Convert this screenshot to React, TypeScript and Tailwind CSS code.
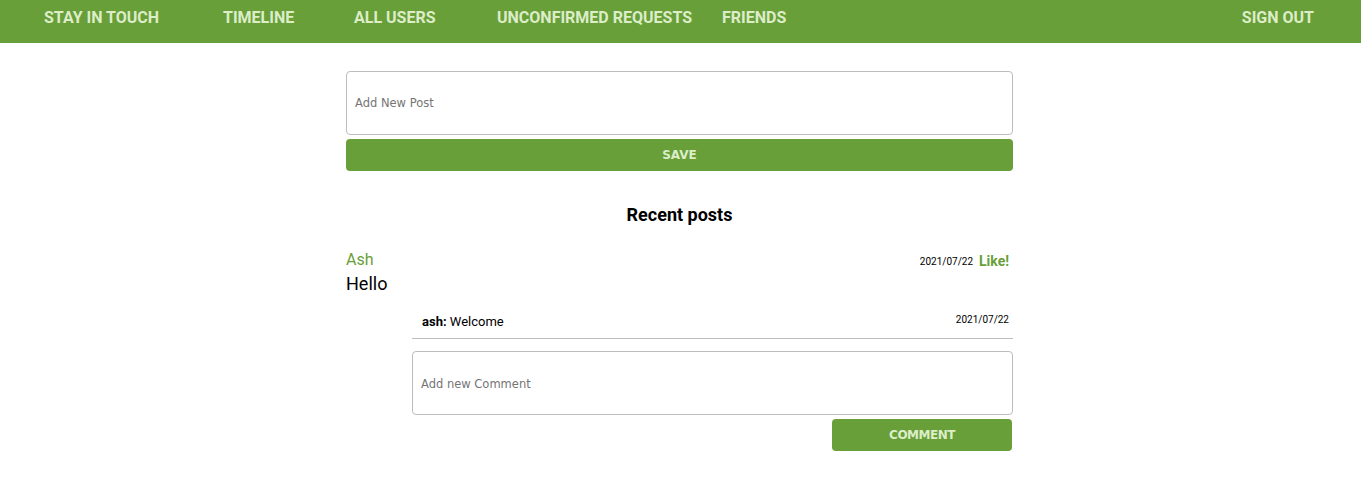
export default function App() {
  const navItems = [
    { label: 'STAY IN TOUCH', w: 'w-[179px]' },
    { label: 'TIMELINE', w: 'w-[131px]' },
    { label: 'ALL USERS', w: 'w-[143px]' },
    { label: 'UNCONFIRMED REQUESTS', w: 'w-[225px]' },
    { label: 'FRIENDS', w: 'w-auto' },
  ];

  return (
    <div className="min-h-[481px] bg-white font-['Roboto',sans-serif]">
      <nav className="flex h-[43px] items-start justify-between bg-[#689f38] pl-[44px] pr-[47px] pt-[9px]">
        <div className="flex items-center">
          {navItems.map((item) => (
            <span key={item.label} className={`${item.w} text-[16px] font-bold leading-[18px] text-[#dcedc8]`}>
              {item.label}
            </span>
          ))}
        </div>
        <span className="text-[16px] font-bold leading-[18px] text-[#dcedc8]">SIGN OUT</span>
      </nav>

      <div className="flex justify-center pr-[2px]">
        <main className="w-[667px] pt-[28px]">
          <div className="flex h-[64px] items-center rounded-[4px] border border-[#bdbdbd] px-[8px]">
            <span className="pt-[2px] font-['DejaVu_Sans',sans-serif] text-[11.5px] text-[#757575]">Add New Post</span>
          </div>
          <button className="mt-[4px] flex h-[32px] w-full items-center justify-center rounded-[4px] bg-[#689f38] font-['DejaVu_Sans',sans-serif] text-[12px] font-bold text-[#dcedc8]">
            SAVE
          </button>

          <h2 className="mt-[32px] text-center text-[18px] font-bold leading-[24px] text-black">Recent posts</h2>

          <div className="mt-[23px]">
            <div className="flex items-start justify-between">
              <div>
                <div className="text-[16px] leading-[20px] text-[#689f38]">Ash</div>
                <div className="mt-[3px] text-[18px] leading-[22px] text-black">Hello</div>
              </div>
              <div className="flex items-center gap-[6px] pr-[4px] pt-[1px]">
                <span className="text-[10px] text-black">2021/07/22</span>
                <span className="text-[14px] font-bold text-[#689f38]">Like!</span>
              </div>
            </div>

            <div className="ml-[66px] mt-[12px]">
              <div className="flex h-[32px] items-center justify-between border-b border-[#bdbdbd] pb-[3px] pl-[10px] pr-[4px]">
                <span className="pt-[1px] text-[13px] text-black">
                  <span className="font-bold">ash:</span> Welcome
                </span>
                <span className="-mt-[4px] text-[10px] text-black">2021/07/22</span>
              </div>
              <div className="mt-[12px] flex h-[64px] items-center rounded-[4px] border border-[#bdbdbd] px-[8px]">
                <span className="pt-[3px] font-['DejaVu_Sans',sans-serif] text-[11.5px] text-[#757575]">Add new Comment</span>
              </div>
              <div className="mt-[4px] flex justify-end pr-[1px]">
                <button className="flex h-[32px] w-[180px] items-center justify-center rounded-[4px] bg-[#689f38] font-['DejaVu_Sans',sans-serif] text-[12px] font-bold tracking-[-0.5px] text-[#dcedc8]">
                  COMMENT
                </button>
              </div>
            </div>
          </div>
        </main>
      </div>
    </div>
  );
}
